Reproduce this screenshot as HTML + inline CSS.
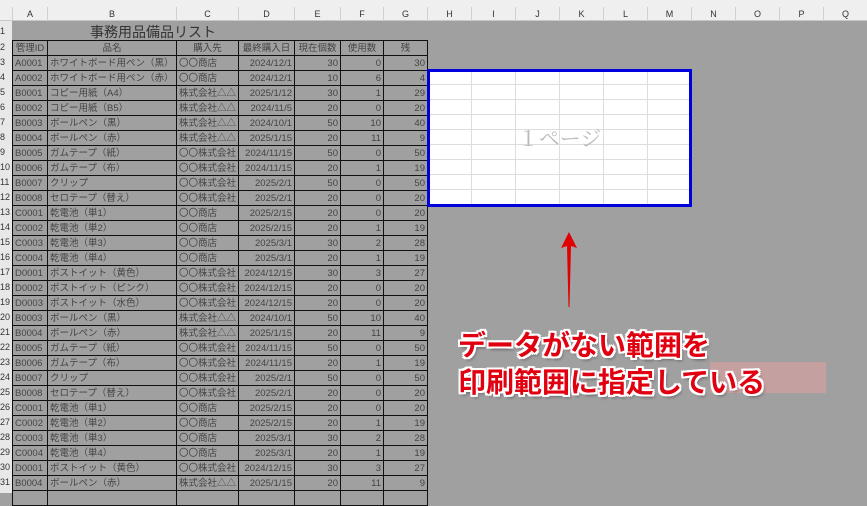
<!DOCTYPE html>
<html><head><meta charset="utf-8"><style>
*{margin:0;padding:0;box-sizing:border-box}
body{width:867px;height:493px;overflow:hidden;background:#a0a0a0;position:relative;font-family:"Liberation Sans","Noto Sans CJK JP",sans-serif}
#top{position:absolute;left:0;top:0;width:867px;height:21px;background:#efefef;border-bottom:1px solid #c8c8c8}
.ch{position:absolute;top:7px;height:14px;font-size:9px;color:#333;text-align:center;line-height:14px;border-left:1px solid #d0d0d0}
#rh{position:absolute;left:0;top:21px;width:12px;height:472px;background:#e8e8e8}
.rn{position:absolute;left:0;width:12px;font-size:9px;color:#333;line-height:15px}
table{position:absolute;left:12px;top:40px;width:415px;border-collapse:collapse;table-layout:fixed;font-size:9.5px;color:#444}
td{border:1px solid #111;height:15px;padding:0 2px;white-space:nowrap;overflow:hidden;line-height:13px}
td.r{text-align:right}
td.c{text-align:center}
#title{position:absolute;left:90px;top:22px;font-size:14px;color:#333}
#page{position:absolute;left:427px;top:69px;width:265px;height:138px;background:#fff;border:3px solid #0000dd;
background-image:linear-gradient(#ddd 1px,transparent 1px),linear-gradient(90deg,#ddd 1px,transparent 1px);background-size:44px 15px;background-position:-2px 12px,41px 0}
#pl{position:absolute;left:0;top:51px;width:100%;text-align:center;font-size:21px;color:#bbb;font-family:"Liberation Serif","Noto Serif CJK SC",serif}
.t{position:absolute;left:458px;font-size:28px;color:#e00010;font-weight:bold;
text-shadow:2px 0 0 #fff,-2px 0 0 #fff,0 2px 0 #fff,0 -2px 0 #fff,2px 2px 0 #fff,-2px -2px 0 #fff,2px -2px 0 #fff,-2px 2px 0 #fff,2px 3px 3px rgba(0,0,0,.4)}
#blur{position:absolute;left:710px;top:362px;width:116px;height:31px;background:rgba(200,160,160,.9)}
</style></head><body>
<div id="top">
<div class="ch" style="left:12px;width:35px">A</div>
<div class="ch" style="left:47px;width:129px">B</div>
<div class="ch" style="left:176px;width:62px">C</div>
<div class="ch" style="left:238px;width:56px">D</div>
<div class="ch" style="left:294px;width:46px">E</div>
<div class="ch" style="left:340px;width:43px">F</div>
<div class="ch" style="left:383px;width:44px">G</div>
<div class="ch" style="left:427px;width:44px">H</div>
<div class="ch" style="left:471px;width:44px">I</div>
<div class="ch" style="left:515px;width:44px">J</div>
<div class="ch" style="left:559px;width:44px">K</div>
<div class="ch" style="left:603px;width:44px">L</div>
<div class="ch" style="left:647px;width:44px">M</div>
<div class="ch" style="left:691px;width:44px">N</div>
<div class="ch" style="left:735px;width:44px">O</div>
<div class="ch" style="left:779px;width:44px">P</div>
<div class="ch" style="left:823px;width:44px">Q</div>
</div>
<div id="rh">
<div class="rn" style="top:3px">1</div>
<div class="rn" style="top:19px">2</div><div class="rn" style="top:34px">3</div><div class="rn" style="top:49px">4</div><div class="rn" style="top:64px">5</div><div class="rn" style="top:79px">6</div><div class="rn" style="top:94px">7</div><div class="rn" style="top:109px">8</div><div class="rn" style="top:124px">9</div><div class="rn" style="top:139px">10</div><div class="rn" style="top:154px">11</div><div class="rn" style="top:169px">12</div><div class="rn" style="top:184px">13</div><div class="rn" style="top:199px">14</div><div class="rn" style="top:214px">15</div><div class="rn" style="top:229px">16</div><div class="rn" style="top:244px">17</div><div class="rn" style="top:259px">18</div><div class="rn" style="top:274px">19</div><div class="rn" style="top:289px">20</div><div class="rn" style="top:304px">21</div><div class="rn" style="top:319px">22</div><div class="rn" style="top:334px">23</div><div class="rn" style="top:349px">24</div><div class="rn" style="top:364px">25</div><div class="rn" style="top:379px">26</div><div class="rn" style="top:394px">27</div><div class="rn" style="top:409px">28</div><div class="rn" style="top:424px">29</div><div class="rn" style="top:439px">30</div><div class="rn" style="top:454px">31</div>
</div>
<div id="title">事務用品備品リスト</div>
<table>
<colgroup><col style="width:35px"><col style="width:129px"><col style="width:62px"><col style="width:56px"><col style="width:46px"><col style="width:43px"><col style="width:44px"></colgroup>
<tr><td class="c">管理ID</td><td class="c">品名</td><td class="c">購入先</td><td class="c">最終購入日</td><td class="c">現在個数</td><td class="c">使用数</td><td class="c">残</td></tr>
<tr><td>A0001</td><td>ホワイトボード用ペン（黒）</td><td>〇〇商店</td><td class="r">2024/12/1</td><td class="r">30</td><td class="r">0</td><td class="r">30</td></tr>
<tr><td>A0002</td><td>ホワイトボード用ペン（赤）</td><td>〇〇商店</td><td class="r">2024/12/1</td><td class="r">10</td><td class="r">6</td><td class="r">4</td></tr>
<tr><td>B0001</td><td>コピー用紙（A4）</td><td>株式会社△△</td><td class="r">2025/1/12</td><td class="r">30</td><td class="r">1</td><td class="r">29</td></tr>
<tr><td>B0002</td><td>コピー用紙（B5）</td><td>株式会社△△</td><td class="r">2024/11/5</td><td class="r">20</td><td class="r">0</td><td class="r">20</td></tr>
<tr><td>B0003</td><td>ボールペン（黒）</td><td>株式会社△△</td><td class="r">2024/10/1</td><td class="r">50</td><td class="r">10</td><td class="r">40</td></tr>
<tr><td>B0004</td><td>ボールペン（赤）</td><td>株式会社△△</td><td class="r">2025/1/15</td><td class="r">20</td><td class="r">11</td><td class="r">9</td></tr>
<tr><td>B0005</td><td>ガムテープ（紙）</td><td>〇〇株式会社</td><td class="r">2024/11/15</td><td class="r">50</td><td class="r">0</td><td class="r">50</td></tr>
<tr><td>B0006</td><td>ガムテープ（布）</td><td>〇〇株式会社</td><td class="r">2024/11/15</td><td class="r">20</td><td class="r">1</td><td class="r">19</td></tr>
<tr><td>B0007</td><td>クリップ</td><td>〇〇株式会社</td><td class="r">2025/2/1</td><td class="r">50</td><td class="r">0</td><td class="r">50</td></tr>
<tr><td>B0008</td><td>セロテープ（替え）</td><td>〇〇株式会社</td><td class="r">2025/2/1</td><td class="r">20</td><td class="r">0</td><td class="r">20</td></tr>
<tr><td>C0001</td><td>乾電池（単1）</td><td>〇〇商店</td><td class="r">2025/2/15</td><td class="r">20</td><td class="r">0</td><td class="r">20</td></tr>
<tr><td>C0002</td><td>乾電池（単2）</td><td>〇〇商店</td><td class="r">2025/2/15</td><td class="r">20</td><td class="r">1</td><td class="r">19</td></tr>
<tr><td>C0003</td><td>乾電池（単3）</td><td>〇〇商店</td><td class="r">2025/3/1</td><td class="r">30</td><td class="r">2</td><td class="r">28</td></tr>
<tr><td>C0004</td><td>乾電池（単4）</td><td>〇〇商店</td><td class="r">2025/3/1</td><td class="r">20</td><td class="r">1</td><td class="r">19</td></tr>
<tr><td>D0001</td><td>ポストイット（黄色）</td><td>〇〇株式会社</td><td class="r">2024/12/15</td><td class="r">30</td><td class="r">3</td><td class="r">27</td></tr>
<tr><td>D0002</td><td>ポストイット（ピンク）</td><td>〇〇株式会社</td><td class="r">2024/12/15</td><td class="r">20</td><td class="r">0</td><td class="r">20</td></tr>
<tr><td>D0003</td><td>ポストイット（水色）</td><td>〇〇株式会社</td><td class="r">2024/12/15</td><td class="r">20</td><td class="r">0</td><td class="r">20</td></tr>
<tr><td>B0003</td><td>ボールペン（黒）</td><td>株式会社△△</td><td class="r">2024/10/1</td><td class="r">50</td><td class="r">10</td><td class="r">40</td></tr>
<tr><td>B0004</td><td>ボールペン（赤）</td><td>株式会社△△</td><td class="r">2025/1/15</td><td class="r">20</td><td class="r">11</td><td class="r">9</td></tr>
<tr><td>B0005</td><td>ガムテープ（紙）</td><td>〇〇株式会社</td><td class="r">2024/11/15</td><td class="r">50</td><td class="r">0</td><td class="r">50</td></tr>
<tr><td>B0006</td><td>ガムテープ（布）</td><td>〇〇株式会社</td><td class="r">2024/11/15</td><td class="r">20</td><td class="r">1</td><td class="r">19</td></tr>
<tr><td>B0007</td><td>クリップ</td><td>〇〇株式会社</td><td class="r">2025/2/1</td><td class="r">50</td><td class="r">0</td><td class="r">50</td></tr>
<tr><td>B0008</td><td>セロテープ（替え）</td><td>〇〇株式会社</td><td class="r">2025/2/1</td><td class="r">20</td><td class="r">0</td><td class="r">20</td></tr>
<tr><td>C0001</td><td>乾電池（単1）</td><td>〇〇商店</td><td class="r">2025/2/15</td><td class="r">20</td><td class="r">0</td><td class="r">20</td></tr>
<tr><td>C0002</td><td>乾電池（単2）</td><td>〇〇商店</td><td class="r">2025/2/15</td><td class="r">20</td><td class="r">1</td><td class="r">19</td></tr>
<tr><td>C0003</td><td>乾電池（単3）</td><td>〇〇商店</td><td class="r">2025/3/1</td><td class="r">30</td><td class="r">2</td><td class="r">28</td></tr>
<tr><td>C0004</td><td>乾電池（単4）</td><td>〇〇商店</td><td class="r">2025/3/1</td><td class="r">20</td><td class="r">1</td><td class="r">19</td></tr>
<tr><td>D0001</td><td>ポストイット（黄色）</td><td>〇〇株式会社</td><td class="r">2024/12/15</td><td class="r">30</td><td class="r">3</td><td class="r">27</td></tr>
<tr><td>B0004</td><td>ボールペン（赤）</td><td>株式会社△△</td><td class="r">2025/1/15</td><td class="r">20</td><td class="r">11</td><td class="r">9</td></tr>
<tr><td></td><td></td><td></td><td></td><td></td><td></td><td></td></tr>
</table>
<div id="page"><div id="pl">１ページ</div></div>
<svg style="position:absolute;left:0;top:0" width="867" height="493"><path d="M569 232 L577 248 L571 246 L569.5 307 L568.5 307 L567 246 L561 248 Z" fill="#e00000"/></svg>
<div id="blur"></div>
<div class="t" style="top:324px">データがない範囲を</div>
<div class="t" style="top:361px">印刷範囲に指定している</div>
</body></html>
